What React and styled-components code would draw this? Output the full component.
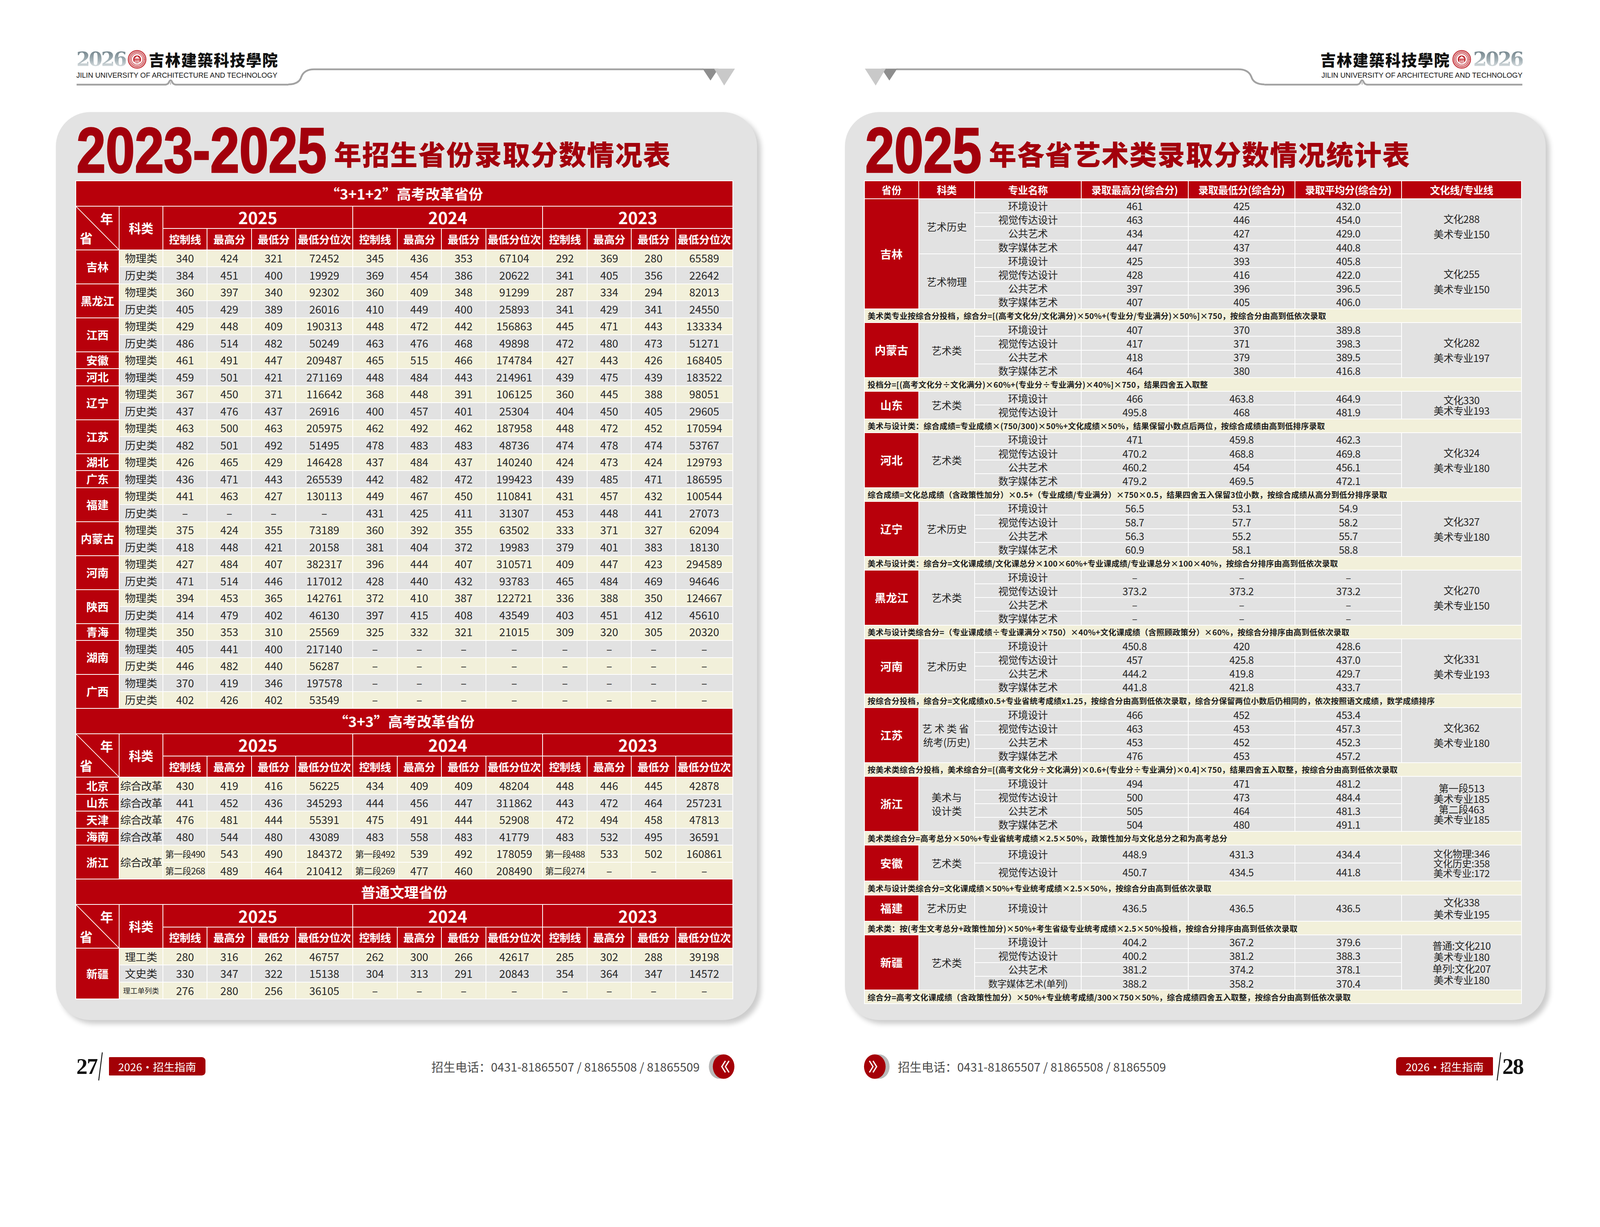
import React from 'react';
import styled, { createGlobalStyle } from 'styled-components';

const RED = '#b8000b';
const TITLE_RED = '#a3000c';
const BEIGE = '#f2f0da';
const GRAY = '#e2e2e2';
const LINE = '#a2a2a2';
const CJK = '"Noto Sans CJK SC", "Noto Sans", sans-serif';
const D = '–';
const PAGE_W = 4441;
const PAGE_H = 3142;

const GlobalStyle = createGlobalStyle`
  html, body { margin: 0; padding: 0; background: #fff; }
  body { width: 100vw; height: 100vh; overflow: hidden; font-family: ${CJK}; color: #222; }
`;

/* the spread is drawn at 4441 x 3142 units and fitted to whatever viewport the page gets */
function useFitZoom() {
  const calc = () =>
    typeof window === 'undefined'
      ? 1
      : Math.min(window.innerWidth / PAGE_W, window.innerHeight / PAGE_H);
  const [zoom, setZoom] = React.useState(calc);
  React.useEffect(() => {
    const onResize = () => setZoom(calc());
    window.addEventListener('resize', onResize);
    return () => window.removeEventListener('resize', onResize);
  }, []);
  return zoom;
}

/* ---------- page frame ---------- */

const Spread = styled.div`
  display: flex;
  width: ${PAGE_W}px;
  height: ${PAGE_H}px;
  background: #fff;
`;

const Page = styled.div`
  width: ${p => p.$w}px;
  padding-left: ${p => p.$pl}px;
  box-sizing: border-box;
  display: flex;
  flex-direction: column;
`;

const Header = styled.header`
  height: 311px;
  box-sizing: border-box;
  padding-top: 136px;
  margin-left: ${p => p.$ml}px;
  width: ${p => p.$w}px;
  display: flex;
  align-items: flex-start;
`;

const LogoBlock = styled.div`
  width: ${p => p.$w}px;
  flex-shrink: 0;
  display: flex;
  flex-direction: column;
  align-items: ${p => (p.$right ? 'flex-end' : 'flex-start')};
`;

const LogoRow = styled.div`
  height: 58px;
  display: flex;
  align-items: center;
  gap: 6px;
`;

const LogoYear = styled.span`
  font-family: "DejaVu Serif", "Liberation Serif", serif;
  font-size: 55px;
  font-weight: 700;
  line-height: 58px;
  letter-spacing: -4px;
  background: linear-gradient(180deg, #687a82 0%, #a6b3b8 55%, #f2f4f5 100%);
  -webkit-background-clip: text;
  background-clip: text;
  color: transparent;
`;

const Calli = styled.span`
  font-family: "Noto Sans CJK TC", "Noto Sans CJK SC", sans-serif;
  font-size: 43px;
  font-weight: 900;
  line-height: 58px;
  letter-spacing: 2px;
  color: #111;
`;

const English = styled.div`
  margin-top: 6px;
  font-family: "Liberation Sans", Arial, sans-serif;
  font-size: 20px;
  line-height: 20px;
  color: #111;
  white-space: nowrap;
`;

const Panel = styled.section`
  width: ${p => p.$w}px;
  height: 2521px;
  box-sizing: border-box;
  padding-left: ${p => p.$pad}px;
  background: #e3e3e3;
  border-radius: 95px;
  box-shadow: 10px 10px 14px rgba(0, 0, 0, 0.2);
  display: flex;
  flex-direction: column;
`;

const TitleRow = styled.div`
  height: 190px;
  display: flex;
  align-items: flex-end;
  gap: 20px;
  padding-left: 4px;
  white-space: nowrap;
`;

/* no narrow face is installed, so the bold digits are squeezed to the condensed width */
const BigYear = styled.span`
  display: inline-block;
  flex-shrink: 0;
  width: ${p => p.$w}px;
  font-family: "Liberation Sans", Arial, sans-serif;
  font-size: 177px;
  font-weight: 700;
  line-height: 160px;
  color: ${TITLE_RED};
  -webkit-text-stroke: 4px ${TITLE_RED};
  margin-bottom: 4px;
  transform: scaleX(0.82);
  transform-origin: left bottom;
`;

const BigTitle = styled.span`
  flex-shrink: 0;
  font-family: ${CJK};
  font-size: 76px;
  font-weight: 900;
  line-height: 78px;
  letter-spacing: 2px;
  color: ${TITLE_RED};
  margin-bottom: 36px;
`;

const Footer = styled.footer`
  height: 310px;
  box-sizing: border-box;
  padding-top: 93px;
  margin-left: ${p => p.$ml}px;
  width: ${p => p.$w}px;
  display: flex;
  align-items: flex-start;
  justify-content: space-between;
`;

const FootGroup = styled.div`
  height: 72px;
  display: flex;
  align-items: center;
  gap: ${p => p.$gap || 0}px;
`;

const PageNum = styled.span`
  font-family: "Liberation Serif", serif;
  font-size: 62px;
  font-weight: 700;
  letter-spacing: -2px;
  color: #111;
  line-height: 1;
`;

const GuideTag = styled.span`
  height: 51px;
  padding: 0 26px;
  margin: ${p => (p.$flip ? '0 8px 0 0' : '0 0 0 14px')};
  display: flex;
  align-items: center;
  background: #a30006;
  color: #fff;
  font-family: ${CJK};
  font-size: 30px;
  border-radius: ${p => (p.$flip ? '10px 2px 2px 10px' : '2px 10px 10px 2px')};
`;

const Phone = styled.span`
  font-family: ${CJK};
  font-size: 33px;
  color: #4a4a4a;
  white-space: nowrap;
`;

/* ---------- tables ---------- */

const Table = styled.table`
  width: 1826px;
  table-layout: fixed;
  border-collapse: separate;
  border-spacing: 3px;
  background: #fff;
  font-family: ${CJK};
`;

const Col = styled.col`
  width: ${p => p.$w}px;
`;

const Cell = styled.td`
  padding: 0;
  height: ${p => p.$h || 45}px;
  text-align: center;
  vertical-align: middle;
  line-height: 1;
  white-space: nowrap;
  background: ${p => p.$bg || GRAY};
  color: #262626;
  font-size: ${p => p.$size || 30}px;
  letter-spacing: ${p => p.$ls || 0}px;
`;

const RedCell = styled(Cell)`
  background: ${RED};
  color: #fff;
  font-weight: 700;
`;

const SectionTitle = styled(RedCell)`
  height: 68px;
  font-size: 40px;
`;

const YearCell = styled(RedCell)`
  height: 60px;
  font-size: 46px;
`;

const SubCell = styled(RedCell)`
  height: 56px;
  font-size: 30px;
  letter-spacing: -0.5px;
`;

const DiagCell = styled(RedCell)`
  background: linear-gradient(to top right, ${RED} calc(50% - 1.5px), #fff calc(50% - 0.5px), #fff calc(50% + 0.5px), ${RED} calc(50% + 1.5px));
`;

const DiagBox = styled.div`
  height: 119px;
  display: flex;
  flex-direction: column;
  justify-content: space-between;
  padding: 14px 16px 14px 10px;
  box-sizing: border-box;
  font-size: 36px;
`;

const DiagTop = styled.span`
  align-self: flex-end;
`;

const DiagBottom = styled.span`
  align-self: flex-start;
`;

const ProvCell = styled(RedCell)`
  font-size: ${p => p.$size || 31}px;
`;

/* right table */

const ArtHead = styled(RedCell)`
  height: 48px;
  font-size: 28px;
  letter-spacing: -0.5px;
`;

const ArtNote = styled(Cell)`
  height: 36px;
  background: ${BEIGE};
  text-align: left;
  padding-left: 8px;
  font-size: 22px;
  font-weight: 700;
  letter-spacing: 0.2px;
  color: #1e1e1e;
`;

const Lines = styled.div`
  display: flex;
  flex-direction: column;
  align-items: center;
  gap: ${p => p.$gap || 0}px;
  letter-spacing: ${p => p.$ls || 0}px;
`;

const CatLine = styled.span`
  letter-spacing: ${p => p.$ls || 0}px;
`;

/* ---------- drawings ---------- */

const Seal = () => (
  <svg width="52" height="52" viewBox="0 0 52 52">
    <circle cx="26" cy="26" r="24.5" fill="#fff" stroke="#c0262d" strokeWidth="2.5" />
    <circle cx="26" cy="26" r="20" fill="none" stroke="#c0262d" strokeWidth="5" strokeDasharray="1.6 1.1" />
    <circle cx="26" cy="26" r="15.5" fill="#fff" stroke="#c0262d" strokeWidth="1.5" />
    <circle cx="26" cy="26" r="11" fill="#c0262d" />
    <path d="M18 24 L26 17 L34 24 Z" fill="#fff" />
    <path d="M20.5 26 V33 M24.5 26 V33 M28 26 V33 M31.5 26 V33 M18.5 34 H33.5" stroke="#fff" strokeWidth="1.6" />
  </svg>
);

const Rule = ({ w, bump }) => (
  <svg width={w} height="18" viewBox={`0 0 ${w} 18`}>
    <path
      d={`M0 15 H${bump - 16} Q${bump - 7} 15 ${bump - 4} 7 Q${bump} -1 ${bump + 4} 7 Q${bump + 7} 15 ${bump + 16} 15 H${w}`}
      fill="none"
      stroke={LINE}
      strokeWidth="5"
    />
    <path d={`M${bump} 8 V15`} stroke={LINE} strokeWidth="2" />
  </svg>
);

const HeaderCurve = ({ w, mirror }) => (
  <svg width={w} height="104" viewBox={`0 0 ${w} 104`}>
    <g transform={mirror ? `translate(${w},0) scale(-1,1)` : undefined}>
      <path d={`M-2 99 Q30 99 36 78 Q44 57 72 57 H${w - 88}`} fill="none" stroke={LINE} strokeWidth="5" />
      <polygon points={`${w - 90},55 ${w - 46},55 ${w - 68},88`} fill="#8e8e8e" />
      <polygon points={`${w - 58},55 ${w},55 ${w - 30},102`} fill="#c9c9c9" />
    </g>
  </svg>
);

const Slash = () => (
  <svg width="18" height="82" viewBox="0 0 18 82">
    <line x1="4" y1="80" x2="14" y2="2" stroke="#111" strokeWidth="2.5" />
  </svg>
);

const ArrowBadge = ({ right }) => (
  <svg width="78" height="70" viewBox="0 0 78 70">
    <g transform={right ? 'translate(78,0) scale(-1,1)' : undefined}>
      <ellipse cx="34" cy="35" rx="29" ry="34" fill="#b9b9b9" />
      <ellipse cx="46" cy="35" rx="30" ry="34" fill="#a50008" />
      <polyline points="51,19 41,35 51,51" fill="none" stroke="#fff" strokeWidth="3.5" />
      <polyline points="61,19 51,35 61,51" fill="none" stroke="#fff" strokeWidth="3.5" />
    </g>
  </svg>
);

/* ---------- data: left table ---------- */

const YEARS = ['2025', '2024', '2023'];
const SUBS = ['控制线', '最高分', '最低分', '最低分位次'];
const NUM_COLS = [120, 120, 120, 155];
const LEFT_COLS = [118, 118, ...NUM_COLS, ...NUM_COLS, ...NUM_COLS];
const dash8 = Array(8).fill(D);

const reform312 = [
  { prov: '吉林', rows: [
    ['物理类', '340', '424', '321', '72452', '345', '436', '353', '67104', '292', '369', '280', '65589'],
    ['历史类', '384', '451', '400', '19929', '369', '454', '386', '20622', '341', '405', '356', '22642'],
  ] },
  { prov: '黑龙江', rows: [
    ['物理类', '360', '397', '340', '92302', '360', '409', '348', '91299', '287', '334', '294', '82013'],
    ['历史类', '405', '429', '389', '26016', '410', '449', '400', '25893', '341', '429', '341', '24550'],
  ] },
  { prov: '江西', rows: [
    ['物理类', '429', '448', '409', '190313', '448', '472', '442', '156863', '445', '471', '443', '133334'],
    ['历史类', '486', '514', '482', '50249', '463', '476', '468', '49898', '472', '480', '473', '51271'],
  ] },
  { prov: '安徽', rows: [
    ['物理类', '461', '491', '447', '209487', '465', '515', '466', '174784', '427', '443', '426', '168405'],
  ] },
  { prov: '河北', rows: [
    ['物理类', '459', '501', '421', '271169', '448', '484', '443', '214961', '439', '475', '439', '183522'],
  ] },
  { prov: '辽宁', rows: [
    ['物理类', '367', '450', '371', '116642', '368', '448', '391', '106125', '360', '445', '388', '98051'],
    ['历史类', '437', '476', '437', '26916', '400', '457', '401', '25304', '404', '450', '405', '29605'],
  ] },
  { prov: '江苏', rows: [
    ['物理类', '463', '500', '463', '205975', '462', '492', '462', '187958', '448', '472', '452', '170594'],
    ['历史类', '482', '501', '492', '51495', '478', '483', '483', '48736', '474', '478', '474', '53767'],
  ] },
  { prov: '湖北', rows: [
    ['物理类', '426', '465', '429', '146428', '437', '484', '437', '140240', '424', '473', '424', '129793'],
  ] },
  { prov: '广东', rows: [
    ['物理类', '436', '471', '443', '265539', '442', '482', '472', '199423', '439', '485', '471', '186595'],
  ] },
  { prov: '福建', rows: [
    ['物理类', '441', '463', '427', '130113', '449', '467', '450', '110841', '431', '457', '432', '100544'],
    ['历史类', D, D, D, D, '431', '425', '411', '31307', '453', '448', '441', '27073'],
  ] },
  { prov: '内蒙古', rows: [
    ['物理类', '375', '424', '355', '73189', '360', '392', '355', '63502', '333', '371', '327', '62094'],
    ['历史类', '418', '448', '421', '20158', '381', '404', '372', '19983', '379', '401', '383', '18130'],
  ] },
  { prov: '河南', rows: [
    ['物理类', '427', '484', '407', '382317', '396', '444', '407', '310571', '409', '447', '423', '294589'],
    ['历史类', '471', '514', '446', '117012', '428', '440', '432', '93783', '465', '484', '469', '94646'],
  ] },
  { prov: '陕西', rows: [
    ['物理类', '394', '453', '365', '142761', '372', '410', '387', '122721', '336', '388', '350', '124667'],
    ['历史类', '414', '479', '402', '46130', '397', '415', '408', '43549', '403', '451', '412', '45610'],
  ] },
  { prov: '青海', rows: [
    ['物理类', '350', '353', '310', '25569', '325', '332', '321', '21015', '309', '320', '305', '20320'],
  ] },
  { prov: '湖南', rows: [
    ['物理类', '405', '441', '400', '217140', ...dash8],
    ['历史类', '446', '482', '440', '56287', ...dash8],
  ] },
  { prov: '广西', rows: [
    ['物理类', '370', '419', '346', '197578', ...dash8],
    ['历史类', '402', '426', '402', '53549', ...dash8],
  ] },
];

const rows312 = reform312
  .flatMap(g => g.rows.map((r, i) => ({
    prov: i === 0 ? g.prov : null,
    provSpan: g.rows.length,
    cat: r[0],
    vals: r.slice(1),
  })))
  .map((r, i) => ({ ...r, bg: i % 2 === 0 ? BEIGE : GRAY }));

const rows33 = [
  { prov: '北京', cat: '综合改革', bg: BEIGE, vals: ['430', '419', '416', '56225', '434', '409', '409', '48204', '448', '446', '445', '42878'] },
  { prov: '山东', cat: '综合改革', bg: GRAY, vals: ['441', '452', '436', '345293', '444', '456', '447', '311862', '443', '472', '464', '257231'] },
  { prov: '天津', cat: '综合改革', bg: BEIGE, vals: ['476', '481', '444', '55391', '475', '491', '444', '52908', '472', '494', '458', '47813'] },
  { prov: '海南', cat: '综合改革', bg: GRAY, vals: ['480', '544', '480', '43089', '483', '558', '483', '41779', '483', '532', '495', '36591'] },
  { prov: '浙江', provSpan: 2, cat: '综合改革', catSpan: 2, bg: BEIGE, vals: ['第一段490', '543', '490', '184372', '第一段492', '539', '492', '178059', '第一段488', '533', '502', '160861'] },
  { bg: BEIGE, vals: ['第二段268', '489', '464', '210412', '第二段269', '477', '460', '208490', '第二段274', D, D, D] },
];

const rowsGeneral = [
  { prov: '新疆', provSpan: 3, cat: '理工类', bg: BEIGE, vals: ['280', '316', '262', '46757', '262', '300', '266', '42617', '285', '302', '288', '39198'] },
  { cat: '文史类', bg: GRAY, vals: ['330', '347', '322', '15138', '304', '313', '291', '20843', '354', '364', '347', '14572'] },
  { cat: '理工单列类', catSize: 20, bg: BEIGE, vals: ['276', '280', '256', '36105', ...dash8] },
];

/* ---------- data: right table ---------- */

const ART_COLS = [148, 153, 292, 294, 293, 293, 329];
const ART_HEAD = ['省份', '科类', '专业名称', '录取最高分(综合分)', '录取最低分(综合分)', '录取平均分(综合分)', '文化线/专业线'];
const M4 = ['环境设计', '视觉传达设计', '公共艺术', '数字媒体艺术'];
const four = vals => M4.map((m, i) => [m, ...vals[i]]);

const artGroups = [
  { prov: '吉林', blocks: [
    { cat: ['艺术历史'], rows: four([['461', '425', '432.0'], ['463', '446', '454.0'], ['434', '427', '429.0'], ['447', '437', '440.8']]), line: ['文化288', '美术专业150'], gap: 14 },
    { cat: ['艺术物理'], rows: four([['425', '393', '405.8'], ['428', '416', '422.0'], ['397', '396', '396.5'], ['407', '405', '406.0']]), line: ['文化255', '美术专业150'], gap: 14 },
  ], note: '美术类专业按综合分投档，综合分=[(高考文化分/文化满分)×50%+(专业分/专业满分)×50%]×750，按综合分由高到低依次录取' },
  { prov: '内蒙古', blocks: [
    { cat: ['艺术类'], rows: four([['407', '370', '389.8'], ['417', '371', '398.3'], ['418', '379', '389.5'], ['464', '380', '416.8']]), line: ['文化282', '美术专业197'], gap: 14 },
  ], note: '投档分=[(高考文化分÷文化满分)×60%+(专业分÷专业满分)×40%]×750，结果四舍五入取整' },
  { prov: '山东', blocks: [
    { cat: ['艺术类'], rows: [['环境设计', '466', '463.8', '464.9'], ['视觉传达设计', '495.8', '468', '481.9']], line: ['文化330', '美术专业193'], gap: 1 },
  ], note: '美术与设计类：综合成绩=专业成绩×(750/300)×50%+文化成绩×50%，结果保留小数点后两位，按综合成绩由高到低排序录取' },
  { prov: '河北', blocks: [
    { cat: ['艺术类'], rows: four([['471', '459.8', '462.3'], ['470.2', '468.8', '469.8'], ['460.2', '454', '456.1'], ['479.2', '469.5', '472.1']]), line: ['文化324', '美术专业180'], gap: 14 },
  ], note: '综合成绩=文化总成绩（含政策性加分）×0.5+（专业成绩/专业满分）×750×0.5，结果四舍五入保留3位小数，按综合成绩从高分到低分排序录取' },
  { prov: '辽宁', blocks: [
    { cat: ['艺术历史'], rows: four([['56.5', '53.1', '54.9'], ['58.7', '57.7', '58.2'], ['56.3', '55.2', '55.7'], ['60.9', '58.1', '58.8']]), line: ['文化327', '美术专业180'], gap: 14 },
  ], note: '美术与设计类：综合分=文化课成绩/文化课总分×100×60%+专业课成绩/专业课总分×100×40%，按综合分排序由高到低依次录取' },
  { prov: '黑龙江', blocks: [
    { cat: ['艺术类'], rows: four([[D, D, D], ['373.2', '373.2', '373.2'], [D, D, D], [D, D, D]]), line: ['文化270', '美术专业150'], gap: 14 },
  ], note: '美术与设计类综合分=（专业课成绩÷专业课满分×750）×40%+文化课成绩（含照顾政策分）×60%，按综合分排序由高到低依次录取' },
  { prov: '河南', blocks: [
    { cat: ['艺术历史'], rows: four([['450.8', '420', '428.6'], ['457', '425.8', '437.0'], ['444.2', '419.8', '429.7'], ['441.8', '421.8', '433.7']]), line: ['文化331', '美术专业193'], gap: 14 },
  ], note: '按综合分投档，综合分=文化成绩x0.5+专业省统考成绩x1.25，按综合分由高到低依次录取，综合分保留两位小数后仍相同的，依次按照语文成绩，数学成绩排序' },
  { prov: '江苏', blocks: [
    { cat: ['艺术类省', '统考(历史)'], catLs: [6, 0], rows: four([['466', '452', '453.4'], ['463', '453', '457.3'], ['453', '452', '452.3'], ['476', '453', '457.2']]), line: ['文化362', '美术专业180'], gap: 14 },
  ], note: '按美术类综合分投档，美术综合分=[(高考文化分÷文化满分)×0.6+(专业分÷专业满分)×0.4]×750，结果四舍五入取整，按综合分由高到低依次录取' },
  { prov: '浙江', blocks: [
    { cat: ['美术与', '设计类'], rows: four([['494', '471', '481.2'], ['500', '473', '484.4'], ['505', '464', '481.3'], ['504', '480', '491.1']]), line: ['第一段513', '美术专业185', '第二段463', '美术专业185'], gap: 1 },
  ], note: '美术类综合分=高考总分×50%+专业省统考成绩×2.5×50%，政策性加分与文化总分之和为高考总分' },
  { prov: '安徽', h: 48, blocks: [
    { cat: ['艺术类'], rows: [['环境设计', '448.9', '431.3', '434.4'], ['视觉传达设计', '450.7', '434.5', '441.8']], line: ['文化物理:346', '文化历史:358', '美术专业:172'], gap: -2, lineSize: 27 },
  ], note: '美术与设计类综合分=文化课成绩×50%+专业统考成绩×2.5×50%，按综合分由高到低依次录取' },
  { prov: '福建', h: 71, blocks: [
    { cat: ['艺术历史'], rows: [['环境设计', '436.5', '436.5', '436.5']], line: ['文化338', '美术专业195'], gap: 6 },
  ], note: '美术类：按(考生文考总分+政策性加分)×50%+考生省级专业统考成绩×2.5×50%投档，按综合分排序由高到低依次录取' },
  { prov: '新疆', blocks: [
    { cat: ['艺术类'], rows: [['环境设计', '404.2', '367.2', '379.6'], ['视觉传达设计', '400.2', '381.2', '388.3'], ['公共艺术', '381.2', '374.2', '378.1'], ['数字媒体艺术(单列)', '388.2', '358.2', '370.4']], line: ['普通:文化210', '美术专业180', '单列:文化207', '美术专业180'], gap: 4 },
  ], note: '综合分=高考文化课成绩（含政策性加分）×50%+专业统考成绩/300×750×50%，综合成绩四舍五入取整，按综合分由高到低依次录取' },
];

/* ---------- components ---------- */

function SectionHead({ title }) {
  return (
    <>
      <tr>
        <SectionTitle colSpan={14}>{title}</SectionTitle>
      </tr>
      <tr>
        <DiagCell rowSpan={2}>
          <DiagBox>
            <DiagTop>年</DiagTop>
            <DiagBottom>省</DiagBottom>
          </DiagBox>
        </DiagCell>
        <RedCell rowSpan={2} $size={34}>科类</RedCell>
        {YEARS.map(y => (
          <YearCell key={y} colSpan={4}>{y}</YearCell>
        ))}
      </tr>
      <tr>
        {YEARS.map(y => SUBS.map(s => <SubCell key={y + s}>{s}</SubCell>))}
      </tr>
    </>
  );
}

function ScoreRows({ rows }) {
  return rows.map((r, i) => (
    <tr key={i}>
      {r.prov && <ProvCell rowSpan={r.provSpan || 1}>{r.prov}</ProvCell>}
      {r.cat && (
        <Cell rowSpan={r.catSpan || 1} $bg={r.bg} $size={r.catSize || 30} $ls={r.cat.length > 3 && !r.catSize ? -1 : 0}>
          {r.cat}
        </Cell>
      )}
      {r.vals.map((v, j) => (
        <Cell key={j} $bg={r.bg} $size={v.includes('段') ? 25 : 30} $ls={v.includes('段') ? -1 : 0}>
          {v}
        </Cell>
      ))}
    </tr>
  ));
}

function ScoreTable() {
  return (
    <Table>
      <colgroup>
        {LEFT_COLS.map((w, i) => <Col key={i} $w={w} />)}
      </colgroup>
      <tbody>
        <SectionHead title="“3+1+2”高考改革省份" />
        <ScoreRows rows={rows312} />
        <SectionHead title="“3+3”高考改革省份" />
        <ScoreRows rows={rows33} />
        <SectionHead title="普通文理省份" />
        <ScoreRows rows={rowsGeneral} />
      </tbody>
    </Table>
  );
}

function ArtGroup({ g }) {
  const total = g.blocks.reduce((n, b) => n + b.rows.length, 0);
  const h = g.h || 36;
  return (
    <>
      {g.blocks.map((b, bi) =>
        b.rows.map((r, ri) => (
          <tr key={`${bi}-${ri}`}>
            {bi === 0 && ri === 0 && (
              <ProvCell rowSpan={total} $h={h}>{g.prov}</ProvCell>
            )}
            {ri === 0 && (
              <Cell rowSpan={b.rows.length} $h={h} $size={28}>
                <Lines $gap={10}>
                  {b.cat.map((c, k) => (
                    <CatLine key={c} $ls={b.catLs ? b.catLs[k] : 0}>{c}</CatLine>
                  ))}
                </Lines>
              </Cell>
            )}
            {r.map((v, k) => (
              <Cell key={k} $h={h} $size={k === 0 && v.length > 6 ? 26 : 28} $ls={-0.5}>{v}</Cell>
            ))}
            {ri === 0 && (
              <Cell rowSpan={b.rows.length} $h={h} $size={b.lineSize || 28}>
                <Lines $gap={b.gap} $ls={-0.5}>
                  {b.line.map((l, k) => <span key={k}>{l}</span>)}
                </Lines>
              </Cell>
            )}
          </tr>
        ))
      )}
      <tr>
        <ArtNote colSpan={7}>{g.note}</ArtNote>
      </tr>
    </>
  );
}

function ArtTable() {
  return (
    <Table>
      <colgroup>
        {ART_COLS.map((w, i) => <Col key={i} $w={w} />)}
      </colgroup>
      <tbody>
        <tr>
          {ART_HEAD.map(hd => <ArtHead key={hd}>{hd}</ArtHead>)}
        </tr>
        {artGroups.map(g => <ArtGroup key={g.prov} g={g} />)}
      </tbody>
    </Table>
  );
}

function Logo({ right, w, bump }) {
  const parts = [
    <LogoYear key="y">2026</LogoYear>,
    <Seal key="s" />,
    <Calli key="c">吉林建築科技學院</Calli>,
  ];
  return (
    <LogoBlock $w={w} $right={right}>
      <LogoRow>{right ? parts.reverse() : parts}</LogoRow>
      <English>JILIN UNIVERSITY OF ARCHITECTURE AND TECHNOLOGY</English>
      <Rule w={w} bump={bump} />
    </LogoBlock>
  );
}

const PHONE = '招生电话：0431-81865507 / 81865508 / 81865509';

export default function App() {
  const zoom = useFitZoom();
  return (
    <>
      <GlobalStyle />
      <Spread style={{ zoom }}>
        <Page $w={2220} $pl={155}>
          <Header $ml={57} $w={1828}>
            <Logo w={588} bump={261} />
            <HeaderCurve w={1240} />
          </Header>
          <Panel $w={1946} $pad={54}>
            <TitleRow>
              <BigYear $w={694}>2023-2025</BigYear>
              <BigTitle>年招生省份录取分数情况表</BigTitle>
            </TitleRow>
            <ScoreTable />
          </Panel>
          <Footer $ml={57} $w={1828}>
            <FootGroup>
              <PageNum>27</PageNum>
              <Slash />
              <GuideTag>2026·招生指南</GuideTag>
            </FootGroup>
            <FootGroup $gap={20}>
              <Phone>{PHONE}</Phone>
              <ArrowBadge />
            </FootGroup>
          </Footer>
        </Page>
        <Page $w={2221} $pl={125}>
          <Header $ml={56} $w={1825}>
            <HeaderCurve w={1109} mirror />
            <Logo w={716} bump={271} right />
          </Header>
          <Panel $w={1945} $pad={53}>
            <TitleRow>
              <BigYear $w={323}>2025</BigYear>
              <BigTitle>年各省艺术类录取分数情况统计表</BigTitle>
            </TitleRow>
            <ArtTable />
          </Panel>
          <Footer $ml={51} $w={1832}>
            <FootGroup $gap={18}>
              <ArrowBadge right />
              <Phone>{PHONE}</Phone>
            </FootGroup>
            <FootGroup>
              <GuideTag $flip>2026·招生指南</GuideTag>
              <Slash />
              <PageNum>28</PageNum>
            </FootGroup>
          </Footer>
        </Page>
      </Spread>
    </>
  );
}
